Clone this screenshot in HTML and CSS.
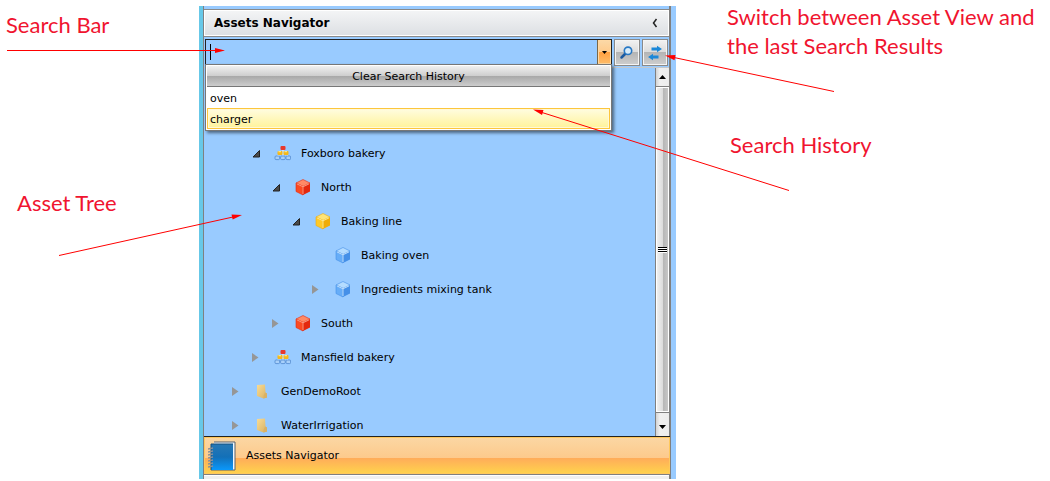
FILE: index.html
```html
<!DOCTYPE html>
<html lang="en">
<head>
    <meta charset="UTF-8">
    <meta name="viewport" content="width=device-width, initial-scale=1.0">
    <title>Assets Navigator</title>
    <link rel="stylesheet" href="styles.css">
</head>
<body>

    <svg class="symbols" aria-hidden="true">
        <defs>
            <linearGradient id="bookFill" x1="0" y1="0" x2="0" y2="1">
                <stop offset="0" stop-color="#2878b4"/>
                <stop offset="0.5" stop-color="#1370b8"/>
                <stop offset="1" stop-color="#0a98fb"/>
            </linearGradient>
            <linearGradient id="folderFill" x1="0" y1="0" x2="1" y2="1">
                <stop offset="0" stop-color="#f8dc96"/>
                <stop offset="1" stop-color="#d8b060"/>
            </linearGradient>
        </defs>
        <symbol id="cube" viewBox="0 0 17 17">
            <path class="cube-top" d="M9 0.500 L16 4 L9 7.500 L2 4 Z"/>
            <path class="cube-left" d="M2 4 L9 7.500 V16 L2 12.500 Z"/>
            <path class="cube-right" d="M16 4 L9 7.500 V16 L16 12.500 Z"/>
            <path class="cube-shine" d="M2.800 4.800 L9 7.800 L15.200 4.800 M9 7.800 V15"/>
        </symbol>
        <symbol id="plant" viewBox="0 0 17 17">
            <path d="M9 4 V12 M5.500 8.500 L3 12 M12.500 8.500 L14 12" stroke="#f4f8ff" fill="none"/>
            <rect x="6.500" y="1" width="5" height="4" rx="1" fill="#e8382c"/>
            <rect x="3.500" y="6" width="5" height="4" rx="1" fill="#f4b81c"/>
            <rect x="9.500" y="6" width="5" height="4" rx="1" fill="#f4b81c"/>
            <path d="M4.500 6.700 h2.500 M10.500 6.700 h2.500" stroke="#fff0a0"/>
            <g fill="#a8d0fa" stroke="#4f88ce" stroke-width="0.800">
                <rect x="1" y="11" width="4.600" height="3.600" rx="1"/>
                <rect x="6.600" y="11" width="4.600" height="3.600" rx="1"/>
                <rect x="12" y="11" width="4.600" height="3.600" rx="1"/>
            </g>
        </symbol>
        <symbol id="folder" viewBox="0 0 17 17">
            <path d="M3 2 L11 1.500 L11.500 9.500 L13 10.500 V14.500 L9.500 15.500 L3 13 Z" fill="url(#folderFill)"/>
            <path d="M11 9.500 L13 10.500 V14.500 L9.500 15.500 L9.500 13 Z" fill="#d9b164"/>
        </symbol>
        <symbol id="opened" viewBox="0 0 15 15">
            <path d="M10.500 4.500 V11 H4 Z" fill="#4a4a4a" stroke="#222"/>
        </symbol>
        <symbol id="closed" viewBox="0 0 15 15">
            <path d="M3 3 L9.500 7.500 L3 12 Z" fill="#969696"/>
        </symbol>
    </svg>

    <div class="page">
        <aside class="notes notes-left">
            <p class="note note-bar">Search Bar</p>
            <p class="note note-tree">Asset Tree</p>
            <svg class="arrows" width="250" height="270" aria-hidden="true">
                <path d="M7 50.500 H216"/>
                <path class="head" d="M225 50.500 L215 48 V53 Z"/>
                <path d="M59 255.500 L233 217"/>
                <path class="head" d="M242 215 L231.500 214.500 L232.700 219.500 Z"/>
            </svg>
        </aside>

        <main class="panel">
            <header class="panel-header">
                <h1>Assets Navigator</h1>
                <button class="collapse" type="button" aria-label="Collapse">
                    <svg width="8" height="10" viewBox="0 0 8 10"><path d="M5.500 1 L2.500 5 L5.500 9" fill="none" stroke="#222" stroke-width="1.500"/></svg>
                </button>
            </header>

            <form class="search">
                <div class="combo">
                    <input type="text" id="search" name="search" aria-label="Search assets" autocomplete="off">
                    <button class="drop" type="button" id="toggleHistory" aria-label="Search history">
                        <svg width="5" height="3" viewBox="0 0 5 3"><path d="M0 0 H5 L2.500 3 Z"/></svg>
                    </button>
                    <div class="history" id="history">
                        <button class="clear" type="button">Clear Search History</button>
                        <button class="entry" type="button">oven</button>
                        <button class="entry selected" type="button">charger</button>
                    </div>
                </div>
                <button class="tool" type="submit" aria-label="Search">
                    <svg width="16" height="16" viewBox="0 0 16 16">
                        <path d="M6.500 8.500 L2.500 12.500" stroke="#1c5aa0" stroke-width="2.500" stroke-linecap="round"/>
                        <circle cx="9" cy="5.800" r="3.700" fill="#d8ecfa" stroke="#2878c4" stroke-width="1.600"/>
                    </svg>
                </button>
                <button class="tool" type="button" aria-label="Switch view">
                    <svg width="16" height="16" viewBox="0 0 16 16" fill="#1c88d8">
                        <path d="M4.500 2.500 H10 V0.800 L15 4 L10 7.200 V5.500 H4.500 Z"/>
                        <path d="M11.500 10.500 H6 V8.800 L1 12 L6 15.200 V13.500 H11.500 Z"/>
                    </svg>
                </button>
            </form>

            <div class="tree-area">
                <ul class="tree">
                    <li>
                        <ul>
                            <li>
                                <div class="node"><button class="toggle" type="button" aria-label="Collapse"><svg><use href="#opened"/></svg></button><svg class="icon"><use href="#plant"/></svg>Foxboro bakery</div>
                                <ul>
                                    <li>
                                        <div class="node"><button class="toggle" type="button" aria-label="Collapse"><svg><use href="#opened"/></svg></button><svg class="icon red"><use href="#cube"/></svg>North</div>
                                        <ul>
                                            <li>
                                                <div class="node"><button class="toggle" type="button" aria-label="Collapse"><svg><use href="#opened"/></svg></button><svg class="icon yellow"><use href="#cube"/></svg>Baking line</div>
                                                <ul>
                                                    <li><div class="node"><span class="toggle"></span><svg class="icon blue"><use href="#cube"/></svg>Baking oven</div></li>
                                                    <li><div class="node"><button class="toggle" type="button" aria-label="Expand"><svg><use href="#closed"/></svg></button><svg class="icon blue"><use href="#cube"/></svg>Ingredients mixing tank</div></li>
                                                </ul>
                                            </li>
                                        </ul>
                                    </li>
                                    <li><div class="node"><button class="toggle" type="button" aria-label="Expand"><svg><use href="#closed"/></svg></button><svg class="icon red"><use href="#cube"/></svg>South</div></li>
                                </ul>
                            </li>
                            <li><div class="node"><button class="toggle" type="button" aria-label="Expand"><svg><use href="#closed"/></svg></button><svg class="icon"><use href="#plant"/></svg>Mansfield bakery</div></li>
                        </ul>
                    </li>
                    <li><div class="node"><button class="toggle" type="button" aria-label="Expand"><svg><use href="#closed"/></svg></button><svg class="icon"><use href="#folder"/></svg>GenDemoRoot</div></li>
                    <li><div class="node"><button class="toggle" type="button" aria-label="Expand"><svg><use href="#closed"/></svg></button><svg class="icon"><use href="#folder"/></svg>WaterIrrigation</div></li>
                </ul>
                <div class="scrollbar">
                    <button type="button" aria-label="Scroll up"><svg width="7" height="4" viewBox="0 0 7 4"><path d="M0 4 H7 L3.500 0 Z"/></svg></button>
                    <div class="thumb"><span class="grip"></span></div>
                    <button type="button" aria-label="Scroll down"><svg width="7" height="4" viewBox="0 0 7 4"><path d="M0 0 H7 L3.500 4 Z"/></svg></button>
                </div>
            </div>

            <button class="section" type="button">
                <svg width="30" height="32" viewBox="0 0 30 32" aria-hidden="true">
                    <path d="M6 2 H27 V30 H3" fill="#f0f6fc" stroke="#57606c"/>
                    <rect x="3" y="4" width="22" height="26" fill="url(#bookFill)"/>
                    <path d="M3 4 H25 M3 4 V30" stroke="#174f7c" fill="none"/>
                    <path d="M0 9 l5 -1 M0 12 l5 -1 M0 15 l5 -1 M0 18 l5 -1 M0 21 l5 -1 M0 24 l5 -1 M0 27 l5 -1" stroke="#87909c" stroke-width="1.500"/>
                </svg>
                Assets Navigator
            </button>
            <div class="panel-end"></div>
        </main>

        <aside class="notes notes-right">
            <p class="note note-switch">Switch between Asset View and the last Search Results</p>
            <p class="note note-history">Search History</p>
            <svg class="arrows" width="310" height="200" aria-hidden="true">
                <path d="M308 91.500 L148 57.500"/>
                <path class="head" d="M139 55.500 L149.500 55 L148.500 60.300 Z"/>
                <path d="M263 190.500 L16 112.500"/>
                <path class="head" d="M7 109.500 L17.500 110 L16 115 Z"/>
            </svg>
        </aside>
    </div>

    <script>
        const historyBox = document.getElementById('history');

        document.getElementById('toggleHistory').addEventListener('click', () => {
            historyBox.hidden = !historyBox.hidden;
        });

        document.querySelector('.search').addEventListener('submit', (e) => {
            e.preventDefault();
        });
    </script>
</body>
</html>
```
FILE: styles.css
```css
* {
    box-sizing: border-box;
}
body {
    margin: 0;
    background-color: #fff;
    color: #000;
    font-family: "DejaVu Sans", Verdana, sans-serif;
    font-size: 11px;
}
button {
    display: flex;
    align-items: center;
    justify-content: center;
    padding: 0;
    border: 0;
    background: none;
    color: inherit;
    font: inherit;
    cursor: pointer;
}
.symbols {
    position: absolute;
    width: 0;
    height: 0;
}
.page {
    display: grid;
    grid-template-columns: 199px minmax(0, 1fr) 374px;
    grid-template-rows: minmax(0, 1fr);
    height: 100vh;
    overflow: hidden;
}

/* callouts */
.notes {
    position: relative;
    z-index: 3;
    pointer-events: none;
}
.note {
    margin: 0;
    color: #f0142f;
    font-family: Lato, sans-serif;
    font-size: 22px;
    line-height: 29px;
}
.notes-left {
    padding: 10px 0 0 6px;
}
.note-tree {
    margin: 149px 0 0 11px;
}
.notes-right {
    padding: 2px 0 0 51px;
}
.note-history {
    margin: 70px 0 0 3px;
}
.arrows {
    position: absolute;
    top: 0;
    left: 0;
    fill: none;
    stroke: #f00;
    stroke-width: 1;
}
.notes-right .arrows {
    left: -150px;
}
.arrows .head {
    fill: #f00;
    stroke: none;
}

/* navigator panel */
.panel {
    display: flex;
    flex-direction: column;
    margin: 6px 0 2px;
    padding: 3px 5px 0 0;
    border-left: 4px solid #67c8e8;
    background: linear-gradient(#808080, #808080) 0 0 / 1px 100% no-repeat,
                linear-gradient(#808080, #808080) calc(100% - 5px) 0 / 2px 100% no-repeat,
                #99cbff;
}
.panel-header {
    display: flex;
    align-items: center;
    justify-content: space-between;
    height: 28px;
    margin: 0 2px 0 1px;
    padding: 0 10px;
    border: 1px solid #8a8a8a;
    border-width: 1px 0;
    background: linear-gradient(#f4f5f6, #dcdfe3);
    box-shadow: inset 0 0 0 1px #fff;
}
.panel-header h1 {
    margin: 0;
    font-size: 12px;
}
.search {
    display: flex;
    gap: 2px;
    margin: 2px 3px 0 2px;
    height: 27px;
}
.combo {
    position: relative;
    display: flex;
    flex: 1;
    border: 1px solid #222;
    border-bottom: 2px solid #666;
}
.combo input {
    flex: 1;
    min-width: 0;
    padding: 0 5px;
    border: 0;
    outline: none;
    /* insertion caret */
    background: linear-gradient(#000, #000) 4px 4px / 1px 16px no-repeat #99cbff;
    font: inherit;
}
.drop {
    width: 14px;
    border-left: 1px solid #7a6848;
    background: linear-gradient(#fbd9a8, #ffcb8c 50%, #ff9f40 50%, #ffbd6a);
    box-shadow: inset 0 0 0 1px #ffd9a4;
}
.tool {
    width: 26px;
    border: 1px solid #8a8a8a;
    background: linear-gradient(#f2f2f2, #dcdcdc 48%, #b4b4b4 48%, #cecece);
    box-shadow: inset 0 0 0 1px #f4f4f4;
}
.history {
    position: absolute;
    z-index: 2;
    top: 100%;
    left: -1px;
    right: -1px;
    padding: 1px;
    border: 1px solid #777;
    background-color: #fff;
    box-shadow: 2px 2px 3px rgba(0, 0, 0, 0.5);
}
.history button {
    width: 100%;
    height: 21px;
}
.history .clear {
    border-bottom: 1px solid #777;
    background: linear-gradient(#f0f0f0, #cfcfcf 48%, #a6a6a6 48%, #cdcdcd);
}
.history .entry {
    justify-content: flex-start;
    padding: 2px 2px 0;
    border: 1px solid transparent;
}
.history .selected {
    border-color: #fcc63c;
    background: linear-gradient(#fffce0, #fff39a);
    box-shadow: inset 0 0 0 1px #fff8d8;
}

/* tree */
.tree-area {
    display: flex;
    flex: 1;
    min-height: 0;
    margin: 1px 2px 0 1px;
    border-top: 1px solid #c4c8cc;
    overflow: hidden;
}
.tree {
    flex: 1;
    margin: 0;
    padding: 68px 0 0 25px;
}
.tree ul {
    margin: 0;
    padding: 0 0 0 20px;
}
.tree li {
    list-style: none;
}
.node {
    display: flex;
    align-items: center;
    gap: 10px;
    height: 34px;
}
.toggle,
.toggle svg {
    width: 15px;
    height: 15px;
}
.icon {
    width: 17px;
    height: 17px;
}
.red {
    --top: #ff8a66;
    --left: #fb4a22;
    --right: #e4290e;
    --edge: #ffb095;
}
.yellow {
    --top: #ffe476;
    --left: #ffc928;
    --right: #f0ac08;
    --edge: #fff2a8;
}
.blue {
    --top: #b4dcff;
    --left: #66adf8;
    --right: #4590e8;
    --edge: #d8eeff;
}
.cube-top {
    fill: var(--top);
    stroke: var(--right);
    stroke-width: 0.6;
}
.cube-left {
    fill: var(--left);
    stroke: var(--right);
    stroke-width: 0.6;
}
.cube-right {
    fill: var(--right);
}
.cube-shine {
    fill: none;
    stroke: var(--edge);
    stroke-width: 0.8;
}
.scrollbar {
    display: flex;
    flex-direction: column;
    width: 14px;
    border-left: 1px solid #808080;
    background-color: #ececec;
}
.scrollbar button {
    height: 18px;
    background: linear-gradient(to right, #d4d4d4, #f0f0f0 30%, #ececec);
}
.scrollbar button:last-child {
    height: 23px;
}
.scrollbar button:last-child svg {
    margin-top: 4px;
}
.thumb {
    display: flex;
    flex: 1;
    align-items: center;
    justify-content: center;
    border: 1px solid #808080;
    border-width: 1px 0;
    background: linear-gradient(to right, #f4f4f4, #dcdcdc 50%, #b4b4b4 50%, #cacaca);
    box-shadow: inset 0 0 0 1px #fff;
}
.grip {
    width: 9px;
    height: 6px;
    background: repeating-linear-gradient(#000 0, #000 1px, #fff 1px, #fff 2px);
}

.section {
    justify-content: flex-start;
    gap: 8px;
    height: 39px;
    margin: 0 1px 0 1px;
    padding: 0 4px;
    border: 1px solid #808080;
    border-width: 1px 0;
    border-top-color: #222;
    background: linear-gradient(#fbd7a4, #fdca8c 56%, #ffab5a 56%, #ffd44c);
    box-shadow: inset 0 0 0 1px #ffc85c;
}
.panel-end {
    height: 4px;
    margin: 0 2px 0 1px;
    border-top: 1px solid #fff;
    background-color: #f0f0f0;
}
```
